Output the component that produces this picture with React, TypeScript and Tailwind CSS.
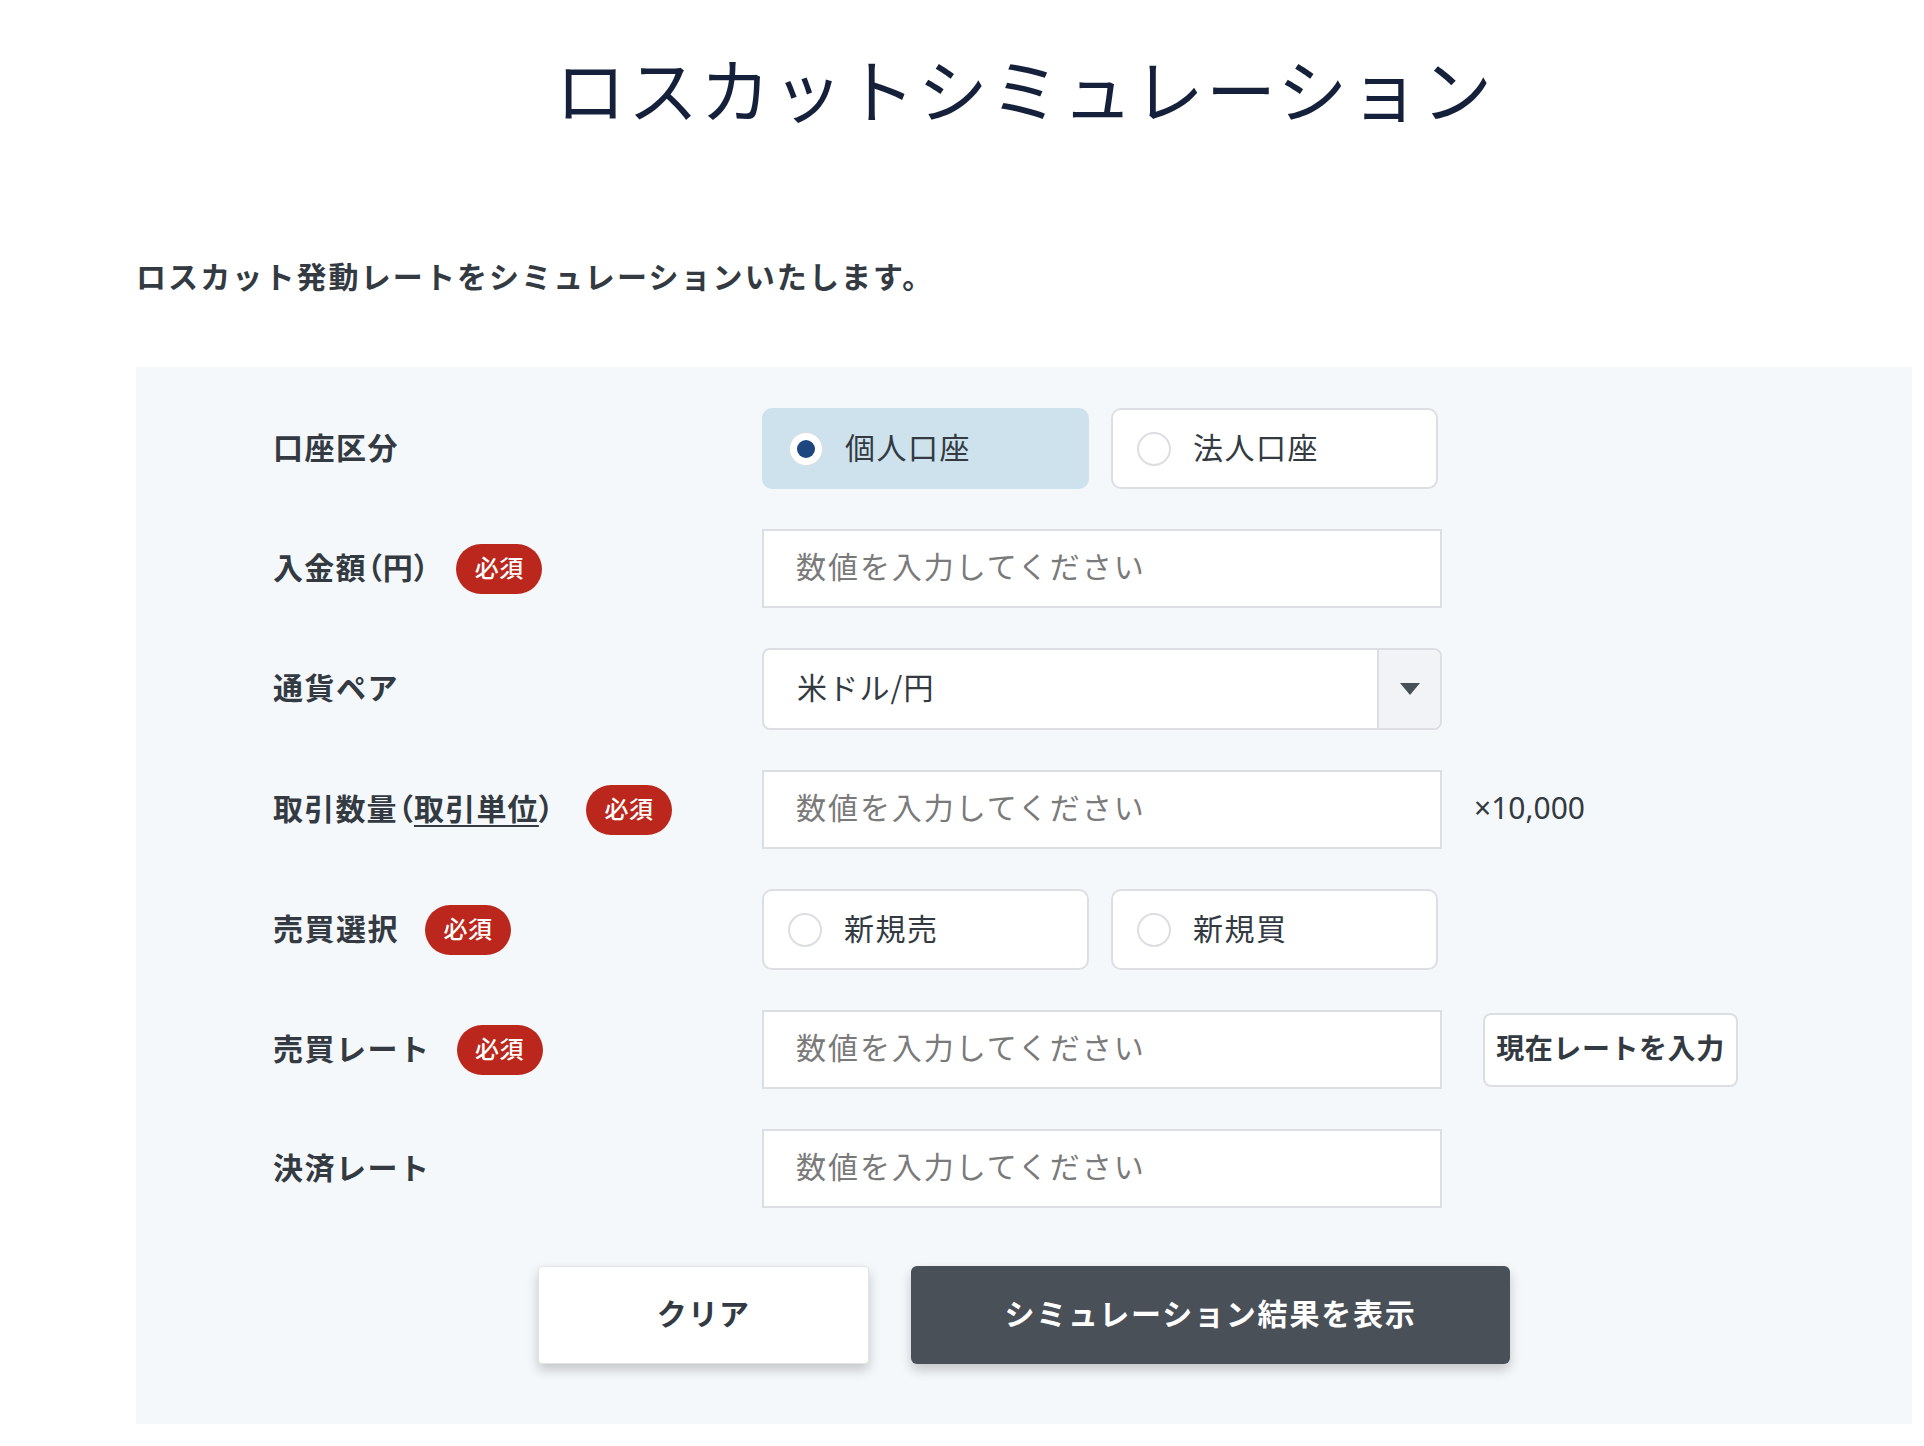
import React from "react";

const font = "font-['Noto_Sans_CJK_JP','Noto_Sans',sans-serif]";

function Badge() {
  return (
    <span className="inline-flex h-[50px] w-[86px] items-center justify-center rounded-full bg-[#bb271c] pb-[3px] text-[24px] font-medium leading-none tracking-[0.02em] text-white">
      必須
    </span>
  );
}

function Label({ children, badge, gap = 26, palt }: { children: React.ReactNode; badge?: boolean; gap?: number; palt?: boolean }) {
  return (
    <div className="flex w-[489px] shrink-0 items-center">
      <span
        className={
          palt
            ? "pb-[6px] text-[30px] font-bold leading-[40px] tracking-[0.04em] text-[#333a42] [font-feature-settings:'palt']"
            : "pb-[6px] text-[30px] font-bold leading-[40px] tracking-[0.05em] text-[#333a42]"
        }
      >
        {children}
      </span>
      {badge && (
        <span className={gap === 31 ? "ml-[31px]" : "ml-[26px]"}>
          <Badge />
        </span>
      )}
    </div>
  );
}

function TextInput() {
  return (
    <div className="flex h-[79px] w-[680px] items-center border-2 border-[#dcdee3] bg-white pb-[6px] pl-[32px] text-[30px] tracking-[0.065em] text-[#7a7a7a]">
      数値を入力してください
    </div>
  );
}

function RadioBox({ label, selected }: { label: string; selected?: boolean }) {
  return (
    <div
      className={
        selected
          ? "flex h-[81px] w-[327px] items-center rounded-[10px] border-2 border-[#cde2ed] bg-[#cde2ed] pl-[25px]"
          : "flex h-[81px] w-[327px] items-center rounded-[10px] border-2 border-[#dcdee3] bg-white pl-[24px]"
      }
    >
      {selected ? (
        <span className="flex h-[34px] w-[34px] items-center justify-center rounded-full border border-[#dcdee3] bg-white">
          <span className="h-[18px] w-[18px] rounded-full bg-[#1d4580]" />
        </span>
      ) : (
        <span className="h-[34px] w-[34px] rounded-full border-2 border-[#dcdee3] bg-white" />
      )}
      <span className="ml-[22px] pb-[6px] text-[30px] leading-none tracking-[0.05em] text-[#333a42]">{label}</span>
    </div>
  );
}

export default function App() {
  return (
    <div className={`min-h-[1446px] bg-white pl-[136px] pr-[12px] ${font}`}>
      <h1 className="pl-[2px] pt-[40px] text-center text-[70px] font-normal leading-[96px] tracking-[0.035em] text-[#15213a]">
        ロスカットシミュレーション
      </h1>
      <p className="mt-[115px] pb-[3px] text-[30px] font-bold leading-[48px] tracking-[0.07em] text-[#333a42]">
        ロスカット発動レートをシミュレーションいたします。
      </p>
      <div className="mt-[65px] bg-[#f5f8fb] pb-[60px] pt-[41px]">
        <div className="flex flex-col gap-[40px] pl-[137px]">
          <div className="flex items-center">
            <Label>口座区分</Label>
            <div className="flex gap-[22px]">
              <RadioBox label="個人口座" selected />
              <RadioBox label="法人口座" />
            </div>
          </div>
          <div className="flex items-center">
            <Label badge palt>
              入金額（円）
            </Label>
            <TextInput />
          </div>
          <div className="flex items-center">
            <Label>通貨ペア</Label>
            <div className="flex h-[82px] w-[680px] overflow-hidden rounded-[8px] border-2 border-[#dcdee3] bg-white">
              <div className="flex flex-1 items-center pb-[6px] pl-[33px] text-[30px] tracking-[0.04em] text-[#333a42]">
                米ドル/円
              </div>
              <div className="flex w-[63px] items-center justify-center border-l-2 border-[#dcdee3] bg-[#f2f3f6]">
                <svg width="20" height="12" viewBox="0 0 20 12">
                  <path d="M0 0 H20 L10 12 Z" fill="#474f57" />
                </svg>
              </div>
            </div>
          </div>
          <div className="flex items-center">
            <Label badge gap={31} palt>
              取引数量（<span className="underline decoration-2 underline-offset-[5px]">取引単位</span>）
            </Label>
            <TextInput />
            <span className="ml-[32px] pb-[4px] font-['Noto_Sans',sans-serif] text-[30px] text-[#333a42]">×10,000</span>
          </div>
          <div className="flex items-center">
            <Label badge>売買選択</Label>
            <div className="flex gap-[22px]">
              <RadioBox label="新規売" />
              <RadioBox label="新規買" />
            </div>
          </div>
          <div className="flex items-center">
            <Label badge>売買レート</Label>
            <TextInput />
            <button className="ml-[41px] flex h-[74px] w-[255px] items-center justify-center rounded-[8px] border-2 border-[#dcdee3] bg-white pb-[5px] text-[28px] font-bold tracking-[0.02em] text-[#333a42]">
              現在レートを入力
            </button>
          </div>
          <div className="flex items-center">
            <Label>決済レート</Label>
            <TextInput />
          </div>
        </div>
        <div className="mt-[58px] flex justify-center gap-[42px]">
          <button className="flex h-[98px] w-[331px] items-center justify-center rounded-[4px] border border-[#e4e4e4] bg-white pb-[5px] text-[30px] font-bold tracking-[0.04em] text-[#333a42] shadow-[0_6px_12px_rgba(0,0,0,0.2)]">
            クリア
          </button>
          <button className="flex h-[98px] w-[599px] items-center justify-center rounded-[6px] bg-[#4a5058] pb-[5px] text-[30px] font-bold tracking-[0.06em] text-white shadow-[0_6px_12px_rgba(0,0,0,0.2)]">
            シミュレーション結果を表示
          </button>
        </div>
      </div>
    </div>
  );
}
